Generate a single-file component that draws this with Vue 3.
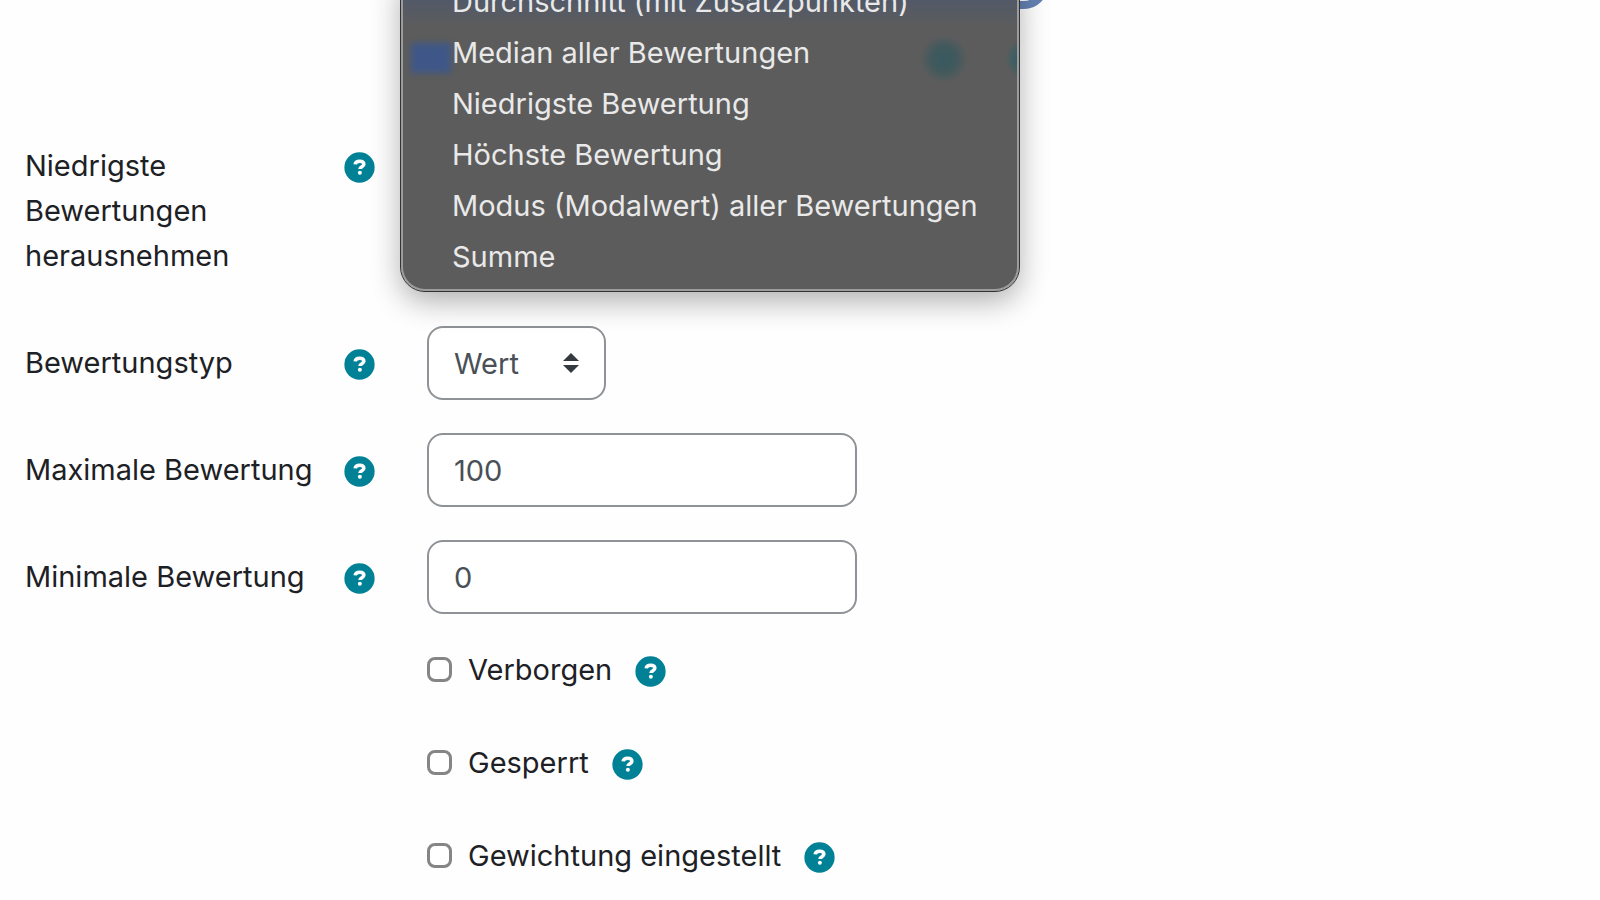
<script setup>
import { ref } from 'vue'

const aggregations = [
  'Durchschnitt (mit Zusatzpunkten)',
  'Median aller Bewertungen',
  'Niedrigste Bewertung',
  'Höchste Bewertung',
  'Modus (Modalwert) aller Bewertungen',
  'Summe',
]
const gradeType = ref('Wert')
const numbers = ref([
  { id: 'grademax', label: 'Maximale Bewertung', value: '100' },
  { id: 'grademin', label: 'Minimale Bewertung', value: '0' },
])
const flags = ref([
  { id: 'hidden', label: 'Verborgen', on: false },
  { id: 'locked', label: 'Gesperrt', on: false },
  { id: 'weight', label: 'Gewichtung eingestellt', on: false },
])
</script>

<template>
  <main class="page">
    <form class="form" @submit.prevent>
      <div class="row row-drop">
        <span class="label">Niedrigste Bewertungen herausnehmen</span>
        <button class="help" type="button" aria-label="Hilfe">
          <svg viewBox="0 0 512 512" aria-hidden="true"><circle cx="256" cy="256" r="250" fill="#008196" /><path d="M184 204c4-36 34-52 74-52 40 0 70 18 70 50 0 40-64 40-64 80" fill="none" stroke="#fff" stroke-width="58" /><circle cx="262" cy="344" r="33" fill="#fff" /></svg>
        </button>
      </div>

      <div class="row">
        <label class="label" for="gradetype">Bewertungstyp</label>
        <button class="help" type="button" aria-label="Hilfe">
          <svg viewBox="0 0 512 512" aria-hidden="true"><circle cx="256" cy="256" r="250" fill="#008196" /><path d="M184 204c4-36 34-52 74-52 40 0 70 18 70 50 0 40-64 40-64 80" fill="none" stroke="#fff" stroke-width="58" /><circle cx="262" cy="344" r="33" fill="#fff" /></svg>
        </button>
        <div class="select-wrap">
          <select id="gradetype" v-model="gradeType" class="control select">
            <option>Wert</option>
          </select>
          <svg class="arrows" viewBox="0 0 16 20" aria-hidden="true"><path d="M0 8 8 0l8 8zM0 12h16l-8 8z" fill="#343a40" /></svg>
        </div>
      </div>

      <div v-for="n in numbers" :key="n.id" class="row">
        <label class="label" :for="n.id">{{ n.label }}</label>
        <button class="help" type="button" aria-label="Hilfe">
          <svg viewBox="0 0 512 512" aria-hidden="true"><circle cx="256" cy="256" r="250" fill="#008196" /><path d="M184 204c4-36 34-52 74-52 40 0 70 18 70 50 0 40-64 40-64 80" fill="none" stroke="#fff" stroke-width="58" /><circle cx="262" cy="344" r="33" fill="#fff" /></svg>
        </button>
        <input :id="n.id" v-model="n.value" class="control input" type="text" />
      </div>

      <div class="flags">
        <div v-for="f in flags" :key="f.id" class="flag">
          <input :id="f.id" v-model="f.on" class="check" type="checkbox" />
          <label :for="f.id">{{ f.label }}</label>
          <button class="help flag-help" type="button" aria-label="Hilfe">
            <svg viewBox="0 0 512 512" aria-hidden="true"><circle cx="256" cy="256" r="250" fill="#008196" /><path d="M184 204c4-36 34-52 74-52 40 0 70 18 70 50 0 40-64 40-64 80" fill="none" stroke="#fff" stroke-width="58" /><circle cx="262" cy="344" r="33" fill="#fff" /></svg>
          </button>
        </div>
      </div>
    </form>

    <select class="open-select" aria-label="Aggregation"></select>
    <ul class="menu" role="listbox" aria-label="Aggregation">
      <li v-for="a in aggregations" :key="a" role="option">{{ a }}</li>
    </ul>
    <span class="glow" aria-hidden="true"></span>
  </main>
</template>

<style>
body {
  margin: 0;
  background: #fefefe;
}
</style>

<style scoped>
.page {
  position: relative;
  overflow: hidden;
  min-height: 100vh;
  box-sizing: border-box;
  padding: 129px 25px 0;
  font: 400 29px/45px Inter, "Liberation Sans", sans-serif;
  color: #1d2125;
}
.form {
  display: flex;
  flex-direction: column;
  gap: 33px;
}
.row {
  display: grid;
  grid-template-columns: 319px 83px minmax(0, 430px);
  align-items: start;
}
.label {
  padding: 14px 0 15px;
}
.row-drop .label {
  padding-right: 60px;
}
.help {
  width: 31px;
  height: 31px;
  margin-top: 23px;
  padding: 0;
  border: 0;
  background: none;
  cursor: pointer;
}
.help svg {
  display: block;
  width: 31px;
  height: 31px;
}
.control {
  box-sizing: border-box;
  height: 74px;
  padding: 0 25px;
  border: 2px solid #8f9296;
  border-radius: 16px;
  background: #fff;
  color: #495057;
  font: inherit;
}
.input {
  width: 100%;
}
.select-wrap {
  position: relative;
  justify-self: start;
}
.select {
  display: block;
  width: 179px;
  appearance: none;
}
.arrows {
  position: absolute;
  right: 27px;
  top: 27px;
  width: 16px;
  height: 20px;
  pointer-events: none;
}
.flags {
  display: flex;
  flex-direction: column;
  gap: 48px;
  padding-left: 402px;
}
.flag {
  display: flex;
  align-items: center;
}
.check {
  appearance: none;
  box-sizing: border-box;
  width: 25px;
  height: 25px;
  margin: 0 16px 0 0;
  border: 3px solid #858585;
  border-radius: 8px;
  background: #fff;
}
.flag-help {
  margin: 3px 0 0 23px;
}
.open-select {
  appearance: none;
  position: absolute;
  top: -72px;
  left: 427px;
  width: 621px;
  height: 81px;
  box-sizing: border-box;
  border: 8px solid #6480b4;
  border-radius: 24px;
  background: #fff;
}
.menu {
  position: absolute;
  top: -24px;
  left: 401px;
  box-sizing: border-box;
  width: 618px;
  margin: 0;
  padding: 0 0 7px 49px;
  border: 2px solid #9c9c9c;
  border-top: 0;
  border-radius: 0 0 24px 24px;
  outline: 1px solid #303234;
  list-style: none;
  line-height: 51px;
  color: #e9e9e9;
  background:
    radial-gradient(circle at 541px 83px, #385a60 0, #40595d 12px, transparent 24px),
    radial-gradient(circle at 624px 83px, #14606b 0, transparent 22px),
    linear-gradient(#525967 0, #525967 24px, transparent 52px),
    #5c5c5c;
  box-shadow: 0 10px 30px rgb(0 0 0 / 32%);
}
.glow {
  position: absolute;
  top: 43px;
  left: 411px;
  width: 40px;
  height: 30px;
  background: #3f5788;
  filter: blur(3px);
}
</style>
